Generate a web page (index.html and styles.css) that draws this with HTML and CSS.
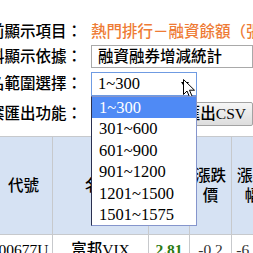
FILE: index.html
```html
<!DOCTYPE html>
<html lang="zh-Hant">
<head>
  <meta charset="UTF-8" />
  <title>融資融券排行</title>
  <link rel="stylesheet" href="styles.css">
</head>
<body>
  <div class="page">
    <div class="form">
      <div class="row r1">
        <span class="label">目前顯示項目：</span>
        <span class="current">熱門排行－融資餘額（張）</span>
      </div>
      <div class="row r2">
        <span class="label">資料顯示依據：</span>
        <div class="select wide">融資融券增減統計</div>
      </div>
      <div class="row r3">
        <span class="label">排名範圍選擇：</span>
        <div class="select range">
          1~300
          <span class="arrow"></span>
          <ul class="dropdown">
            <li class="active">1~300</li>
            <li>301~600</li>
            <li>601~900</li>
            <li>901~1200</li>
            <li>1201~1500</li>
            <li>1501~1575</li>
          </ul>
          <svg class="cursor" width="13" height="20" viewBox="0 0 13 20">
            <path d="M0.5 0.5 L0.5 15.5 L4 12 L6.8 18.5 L9.2 17.5 L6.5 11.2 L11.5 11.2 Z" fill="#fff" stroke="#000" stroke-width="1"/>
          </svg>
        </div>
      </div>
      <div class="row r4">
        <span class="label">檔案匯出功能：</span>
        <button class="btn first">匯出Excel</button>
        <button class="btn">匯出CSV</button>
      </div>
    </div>

    <table class="rank">
      <colgroup>
        <col class="c-code"><col class="c-name"><col class="c-num"><col class="c-num2"><col class="c-num2"><col class="c-more">
      </colgroup>
      <thead>
        <tr>
          <th>代號</th>
          <th>名稱</th>
          <th>成交價</th>
          <th>漲跌價</th>
          <th>漲跌幅</th>
          <th>融資餘額增減</th>
        </tr>
      </thead>
      <tbody>
        <tr>
          <td>00677U</td>
          <td>富邦VIX</td>
          <td class="down">2.81</td>
          <td class="neg">-0.2</td>
          <td class="neg">-6.64</td>
          <td>1,234</td>
        </tr>
      </tbody>
    </table>
  </div>
</body>
</html>
```

FILE: styles.css
```css
* { margin: 0; padding: 0; box-sizing: border-box; }
html, body { overflow: hidden; }
body {
  font-family: "Liberation Serif", "Noto Sans CJK TC", serif;
  font-size: 15.5px;
  font-weight: 500;
  color: #000;
  background: #fff;
  text-spacing-trim: space-all;
}
.page { padding-top: 20px; }
.form { margin-left: -30px; }
.row {
  display: flex;
  align-items: center;
  gap: 9px;
  white-space: nowrap;
  line-height: 20px;
}
.label { width: 112px; flex: none; text-align: right; }
.r1 { height: 24px; }
.r2 { margin-top: 1px; }
.r3 { margin-top: 4px; }
.r4 { margin-top: 6px; }
.current { color: #ee7b35; }
.select {
  height: 23px;
  border: 1px solid #a9a9a9;
  background: #fff;
  padding-left: 6px;
  display: flex;
  align-items: center;
}
.wide { width: 200px; }
.range {
  position: relative;
  width: 106px;
  height: 24px;
  border-color: #6f9be2;
  font-size: 16.5px;
}
.arrow {
  position: absolute;
  left: 89px; top: 9px;
  border-left: 4px solid transparent;
  border-right: 4px solid transparent;
  border-top: 6px solid #000;
}
.cursor { position: absolute; left: 91px; top: 6px; }
.dropdown {
  position: absolute;
  left: -1px; top: 23px;
  width: 106px;
  list-style: none;
  background: #fff;
  border: 1px solid #8595cc;
  border-left-color: #2a3050;
  z-index: 5;
}
.dropdown li { line-height: 21.4px; padding-left: 7px; }
.dropdown li.active { background: #4f8af5; color: #fff; }
.btn {
  height: 24px;
  padding: 0 6px;
  font: inherit;
  line-height: 20px;
  border: 1px solid #a3a3a3;
  border-radius: 2px;
  background: linear-gradient(#f6f6f6, #dddddd);
  color: #000;
}
.btn.first { width: 94px; margin-right: -5px; }
.rank {
  margin-top: 10px;
  margin-left: -6px;
  width: 330px;
  table-layout: fixed;
  border-collapse: collapse;
  line-height: 20px;
}
.c-code { width: 58px; }
.c-name { width: 96px; }
.c-num { width: 41px; }
.c-num2 { width: 42px; }
.c-more { width: 51px; }
.rank th {
  height: 98px;
  background: #d6e2f3;
  border: 1px solid #c7c9cc;
  font-weight: 500;
  padding: 0 4px;
}
.rank td {
  height: 30px;
  border: 1px solid #c7c9cc;
  text-align: center;
  vertical-align: top;
  padding: 5px 0 0;
  white-space: nowrap;
  overflow: hidden;
}
.rank td.down { color: #2b7a12; font-weight: bold; }
.rank td.neg { color: #333; }
```
